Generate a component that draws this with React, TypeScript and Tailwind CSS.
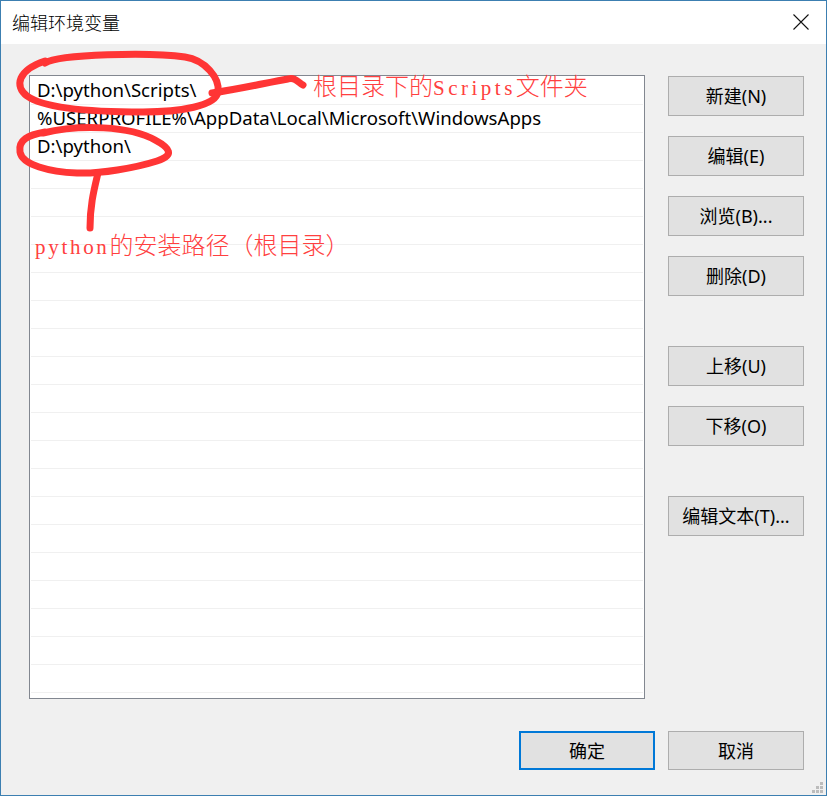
import React from "react";

const uiFont = { fontFamily: '"Noto Sans", "Noto Sans CJK SC", sans-serif' };
const redFont = { fontFamily: '"Liberation Serif", "Noto Sans CJK SC", serif' };

function Btn({ label, extra = "" }: { label: string; extra?: string }) {
  return (
    <div
      className={`w-[136px] h-[40px] flex items-center justify-center bg-[#e1e1e1] border border-[#adadad] text-[18px] text-black leading-none ${extra}`}
    >
      {label}
    </div>
  );
}

const rows = [
  "D:\\python\\Scripts\\",
  "%USERPROFILE%\\AppData\\Local\\Microsoft\\WindowsApps",
  "D:\\python\\",
];

export default function App() {
  const all = Array.from({ length: 22 }, (_, i) => rows[i] ?? "");
  return (
    <div
      className="relative w-[827px] h-[796px] border border-[#3c7fb1] bg-[#f0f0f0] flex flex-col overflow-hidden"
      style={uiFont}
    >
      {/* title bar */}
      <div className="h-[43px] bg-white flex items-center justify-between pl-[11px] pr-[17px] shrink-0">
        <span className="text-[18px] text-black leading-none font-light">编辑环境变量</span>
        <svg width="16" height="16" viewBox="0 0 16 16" className="mt-[-1px]">
          <path d="M0.5 0.5 L15.5 15.5 M15.5 0.5 L0.5 15.5" stroke="#111" strokeWidth="1.1" fill="none" />
        </svg>
      </div>

      {/* main */}
      <div className="flex pl-[28px] pt-[31px] gap-[23px]">
        <div className="w-[616px] h-[624px] border border-[#828790] bg-white pt-[1px] overflow-hidden">
          {all.map((t, i) => (
            <div key={i} className="h-[28px] mx-[1px] border-b border-[#f0f0f0] flex items-center pl-[6px] text-[18.6px] text-black leading-none whitespace-nowrap">
              {t}
            </div>
          ))}
        </div>
        <div className="flex flex-col pt-[1px]">
          <Btn label="新建(N)" />
          <Btn label="编辑(E)" extra="mt-[20px]" />
          <Btn label="浏览(B)..." extra="mt-[20px]" />
          <Btn label="删除(D)" extra="mt-[20px]" />
          <Btn label="上移(U)" extra="mt-[50px]" />
          <Btn label="下移(O)" extra="mt-[20px]" />
          <Btn label="编辑文本(T)..." extra="mt-[50px]" />
        </div>
      </div>

      {/* bottom buttons */}
      <div className="flex justify-end gap-[13px] pr-[22px] mt-[32px]">
        <div className="w-[136px] h-[39px] flex items-center justify-center bg-[#e1e1e1] border-2 border-[#0078d7] text-[18px] text-black leading-none">
          确定
        </div>
        <div className="w-[136px] h-[39px] flex items-center justify-center bg-[#e1e1e1] border border-[#adadad] text-[18px] text-black leading-none">
          取消
        </div>
      </div>

      {/* resize grip */}
      <div className="absolute right-[3px] bottom-[2px] grid grid-cols-3 gap-[1px]">
        <div className="w-[3px] h-[3px]" />
        <div className="w-[3px] h-[3px]" />
        <div className="w-[3px] h-[3px] bg-[#bcbcbc]" />
        <div className="w-[3px] h-[3px]" />
        <div className="w-[3px] h-[3px] bg-[#bcbcbc]" />
        <div className="w-[3px] h-[3px] bg-[#bcbcbc]" />
        <div className="w-[3px] h-[3px] bg-[#bcbcbc]" />
        <div className="w-[3px] h-[3px] bg-[#bcbcbc]" />
        <div className="w-[3px] h-[3px] bg-[#bcbcbc]" />
      </div>

      {/* red annotations */}
      <svg className="absolute left-[-1px] top-[-1px] pointer-events-none" width="827" height="796" viewBox="0 0 827 796">
        <g stroke="#ff3535" strokeWidth="7" fill="none" strokeLinecap="round" strokeLinejoin="round">
          <path d="M 45 63 C 60 54, 150 52, 185 57 C 205 60, 220 78, 218 92 C 216 106, 180 112, 143 112 C 100 112, 45 109, 27 96 C 14 86, 18 70, 45 61" />
          <path d="M 212 93 C 240 89, 270 82, 288 79 C 295 77, 298 82, 303 85" />
          <path d="M 43 133 C 80 124, 130 126, 155 140 C 170 148, 175 155, 157 161 C 135 168, 100 174, 77 173 C 50 172, 22 165, 20 152 C 18 140, 28 135, 45 132" />
          <path d="M 98 173 C 94 190, 90 205, 90 228" />
        </g>
      </svg>
      <div className="absolute left-[312px] top-[74px] text-[24px] leading-none text-[#ff4040] whitespace-nowrap font-light" style={redFont}>
        根目录下的<span className="text-[21px] tracking-[3.5px] font-normal">Scripts</span>文件夹
      </div>
      <div className="absolute left-[34px] top-[233px] text-[24px] leading-none text-[#ff4040] whitespace-nowrap font-light" style={redFont}>
        <span className="text-[21px] tracking-[2.7px] font-normal">python</span>的安装路径（根目录）
      </div>
    </div>
  );
}
